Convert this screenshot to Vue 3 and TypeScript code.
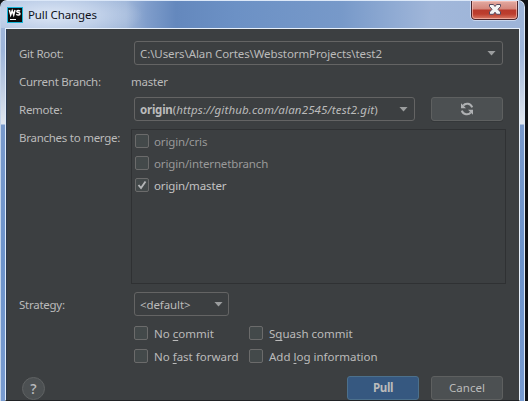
<script setup lang="ts">
import { ref } from 'vue'

interface Branch {
  name: string
  checked: boolean
}

interface Option {
  before: string
  key: string
  after: string
}

const branches = ref<Branch[]>([
  { name: 'origin/cris', checked: false },
  { name: 'origin/internetbranch', checked: false },
  { name: 'origin/master', checked: true },
])

const options: Option[] = [
  { before: 'No ', key: 'c', after: 'ommit' },
  { before: 'S', key: 'q', after: 'uash commit' },
  { before: 'No ', key: 'f', after: 'ast forward' },
  { before: 'Add ', key: 'l', after: 'og information' },
]
</script>

<template>
  <div class="window">
    <header class="titlebar">
      <svg class="logo" width="16" height="16" viewBox="0 0 16 16">
        <rect width="16" height="16" fill="#16b5d8" />
        <rect x="1" y="1" width="14" height="14" fill="#0b0b0b" />
        <path d="M2.400 3 3.700 8 5.200 3.800 6.700 8 8 3" fill="none" stroke="#fff" stroke-width="1.500" />
        <path d="M13 4.200C12 3 9.800 3.200 9.800 4.500C9.800 6 13 5.200 13 6.800C13 8.300 10.500 8.300 9.300 7.200" fill="none" stroke="#fff" stroke-width="1.500" />
        <rect x="3" y="12" width="6" height="1" fill="#fff" />
      </svg>
      <h1>Pull Changes</h1>
      <button class="close" aria-label="Close">
        <svg width="12" height="11" viewBox="0 0 12 11">
          <path d="M.500 .500H4.500L6 2.500L7.500 .500H11.500V2.500L9 5.300L11.500 8V10.300H7.500L6 8.200L4.500 10.300H.500V8L3 5.300L.500 2.500Z" fill="#f4f4f4" stroke="#55495e" stroke-width="1" />
        </svg>
      </button>
    </header>

    <main class="content">
      <div class="row root">
        <label>Git Root:</label>
        <div class="combo wide"><span class="path">C:\Users\Alan Cortes\WebstormProjects\test2</span><i class="arrow" /></div>
      </div>
      <div class="row current">
        <label>Current Branch:</label>
        <span class="value">master</span>
      </div>
      <div class="row remote">
        <label>Remote:</label>
        <div class="combo url"><span><b>origin</b><span class="link">(<em>https://github.com/alan2545/test2.git</em>)</span></span><i class="arrow" /></div>
        <button class="btn refresh" aria-label="Refresh">
          <svg width="14" height="14" viewBox="0 0 14 14">
            <path d="M3.200 3.600C5.500 .600 10.800 1.200 12.200 5.400M10.800 10.400C8.500 13.400 3.200 12.800 1.800 8.600" fill="none" stroke="#afb1b3" stroke-width="2" />
            <path d="M1 1.200V6.200H6ZM13 12.800V7.800H8Z" fill="#afb1b3" />
          </svg>
        </button>
      </div>
      <div class="row merge">
        <label>Branches to merge:</label>
        <div class="list">
          <div v-for="b in branches" :key="b.name" class="branch" :class="{ on: b.checked }">
            <span class="box"><svg v-if="b.checked" width="12" height="12" viewBox="0 0 12 12"><path d="M2.500 6 5 9 9.500 2.500" fill="none" stroke="#b4b6b8" stroke-width="1.900" /></svg></span>
            <span>{{ b.name }}</span>
          </div>
        </div>
      </div>
      <div class="row strategy">
        <label>Strategy:</label>
        <div class="combo small"><span class="def">&lt;default&gt;</span><i class="arrow" /></div>
      </div>
      <div class="options">
        <div v-for="o in options" :key="o.key" class="option">
          <span class="box" /><span>{{ o.before }}<u>{{ o.key }}</u>{{ o.after }}</span>
        </div>
      </div>
      <footer>
        <button class="help">?</button>
        <button class="btn primary">Pull</button>
        <button class="btn cancel">Cancel</button>
      </footer>
    </main>
  </div>
</template>

<style>
body { background: #101216; overflow: hidden; }
</style>

<style scoped>
* { box-sizing: border-box; }
.window {
  width: 525px;
  height: 401px;
  padding: 0 5px 0 4px;
  border: 1px solid #dce8f8;
  border-left-color: #c4d4ea;
  border-bottom: 0;
  border-radius: 7px 7px 0 0;
  background: linear-gradient(#a2b8da 0, #9db5da 50px, #bccbe2 85px, #e1e7ef 123px, #7899cb 124px, #6c93cb 260px, #789bd0 401px);
  font-family: "Noto Sans", "Open Sans", sans-serif;
  font-size: 11.5px;
  line-height: 16px;
  color: #bbbbbb;
  white-space: nowrap;
}
.titlebar {
  display: flex;
  height: 27px;
  margin: 0 -5px 0 -4px;
  padding: 6px 5px 0 6px;
  border-radius: 6px 6px 0 0;
  background:
    radial-gradient(ellipse 92px 26px at 50px 14px, #dce6f5 0, rgba(207,220,240,.65) 55%, transparent),
    linear-gradient(90deg, #a7bddd 0, #a0b7d9 125px, #7f9dcb 146px, #6488bd 175px, #6c91c5 235px, #7799c9 340px, #a1b7da 430px, #9db4d8 524px);
}
.logo { flex: none; }
h1 { flex: 1; margin: 0 0 0 5px; font-size: 11.5px; line-height: 16px; font-weight: 400; letter-spacing: -.1px; color: #10121a; }
.close {
  display: flex;
  justify-content: center;
  width: 47px;
  height: 19px;
  margin: -6px 1px 0 0;
  padding: 3px 0 0;
  border: 1px solid #4b252b;
  border-top: 0;
  border-radius: 0 0 4px 4px;
  outline: 1px solid rgba(225,232,247,.65);
  background: linear-gradient(#e2aaa2 0, #d4857a 8px, #b83a2c 9px, #bd3e2e 13px, #dc8470 19px);
  box-shadow: inset 0 0 0 1px rgba(255,205,195,.6);
}
.content {
  height: 373px;
  padding: 12px 12px 0 14px;
  margin-right: -1px;
  border: 1px solid #e7f0fb;
  border-bottom: 1px solid #202225;
  border-left-color: #dfeaf8;
  background: #3c3f41;
  box-shadow: inset 1px 0 #2b3a50;
}
.row { display: flex; align-items: center; }
label { width: 114px; flex: none; margin-left: -1px; margin-right: 1px; padding-top: 1px; letter-spacing: -.26px; }
.root { height: 24px; }
.current { height: 32px; padding-top: 1px; }
.value { margin-left: -3px; padding-top: 1px; letter-spacing: -.2px; }
.remote { height: 24px; }
.combo {
  display: flex;
  align-items: center;
  justify-content: space-between;
  height: 24px;
  padding: 0 6px 0 5px;
  border: 1px solid #646464;
  border-radius: 3px;
}
.combo > span { padding-top: 1px; }
.path { letter-spacing: -.1px; }
.combo b { letter-spacing: -.22px; }
.link { letter-spacing: .15px; }
.def { letter-spacing: -.1px; }
.wide { width: 369px; }
.url { width: 281px; }
.small { width: 95px; padding-right: 5px; }
.arrow { width: 9px; height: 5px; background: #9b9d9e; clip-path: polygon(0 0, 100% 0, 50% 100%); }
.btn {
  display: flex;
  align-items: center;
  justify-content: center;
  width: 72px;
  height: 24px;
  padding: 0;
  border: 1px solid #5e6060;
  border-radius: 3px;
  background: #4c5052;
  font: inherit;
  color: #bbbbbb;
}
.refresh { margin-left: 16px; box-shadow: 0 1px #35383a; }
.merge { align-items: flex-start; margin-top: 8px; }
.merge label { width: 111px; }
.list { width: 375px; height: 155px; padding: 1px 0 0 3px; border: 1px solid #2f3133; }
.branch, .option { display: flex; align-items: center; gap: 6px; }
.branch { gap: 5px; height: 22px; color: #999999; letter-spacing: -.14px; }
.branch .box { margin-top: -2px; }
.branch.on { color: #c3c3c3; }
.box { display: flex; flex: none; width: 14px; height: 14px; border: 1px solid #6b6b6b; border-radius: 2px; background: #43494a; }
.strategy { margin-top: 8px; height: 24px; }
.options {
  display: grid;
  grid-template-columns: 115px 130px;
  grid-auto-rows: 23px;
  margin: 6px 0 0 114px;
}
.option .box { margin-top: -1px; }
u { text-underline-offset: 2px; text-decoration-thickness: 1px; text-decoration-skip-ink: none; }
footer { display: flex; gap: 12px; margin-top: 8px; padding-right: 4px; }
.help { width: 23px; height: 23px; margin: 1px auto 0 2px; padding: 0; border: 1px solid #5f6263; border-radius: 50%; background: #4c5052; font: 600 14px/19px "Open Sans", sans-serif; color: #b8babc; }
.primary { border-color: #4c708c; background: #365880; font-weight: 700; letter-spacing: -.4px; }
</style>
